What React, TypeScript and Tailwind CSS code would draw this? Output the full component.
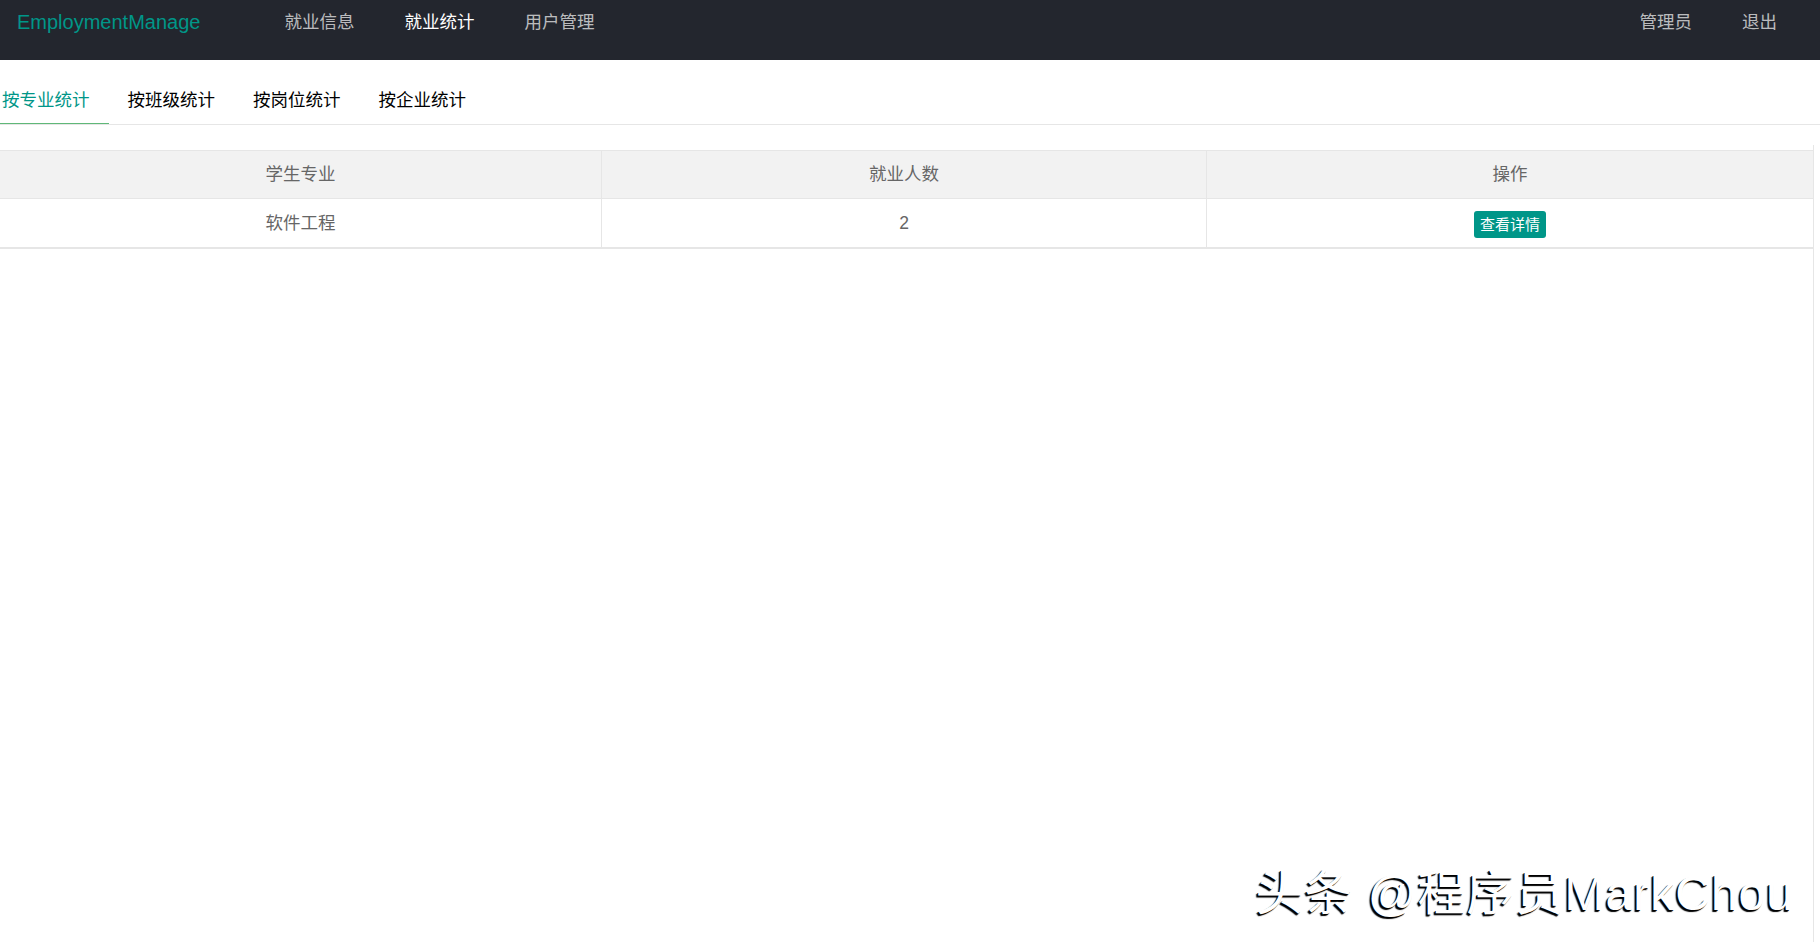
const navLeft = [
  { label: '就业信息', active: false },
  { label: '就业统计', active: true },
  { label: '用户管理', active: false },
];

const tabs = ['按专业统计', '按班级统计', '按岗位统计', '按企业统计'];

const rows = [{ major: '软件工程', count: 2 }];

function Header() {
  return (
    <div className="h-[60px] bg-[#23262e] flex items-start">
      <div className="pl-[17px] h-[44px] leading-[44px] text-[20px] text-[#009688]">EmploymentManage</div>
      <ul className="flex ml-[59px]">
        {navLeft.map((item) => (
          <li
            key={item.label}
            className={`px-[25px] h-[44px] leading-[44px] text-[17.5px] ${
              item.active ? 'text-white' : 'text-white/70'
            }`}
          >
            {item.label}
          </li>
        ))}
      </ul>
      <ul className="flex ml-auto pr-[18px]">
        <li className="px-[25px] h-[44px] leading-[44px] text-[17.5px] text-white/70">管理员</li>
        <li className="px-[25px] h-[44px] leading-[44px] text-[17.5px] text-white/70">退出</li>
      </ul>
    </div>
  );
}

function Tabs() {
  return (
    <div className="mt-[14px] h-[51px] border-b border-[#e6e6e6] overflow-hidden">
      <ul className="flex ml-[-17px] h-[51px]">
        {tabs.map((t, i) => (
          <li
            key={t}
            className={`relative px-[19px] h-[51px] leading-[52px] text-[17.5px] ${
              i === 0 ? 'text-[#009688]' : 'text-black'
            }`}
          >
            {t}
            {i === 0 && <span className="absolute left-0 right-0 bottom-0 h-[2px] bg-[#5fb878]" />}
          </li>
        ))}
      </ul>
    </div>
  );
}

function StatsTable() {
  const cols = 'grid grid-cols-[602px_605px_1fr]';
  return (
    <div className="w-[1813px] border-t border-b-2 border-[#e6e6e6]">
      <div className={`${cols} h-[48px] bg-[#f2f2f2] border-b border-[#e6e6e6] text-[17.5px] text-[#666]`}>
        <div className="flex items-center justify-center border-r border-[#e6e6e6]">学生专业</div>
        <div className="flex items-center justify-center border-r border-[#e6e6e6]">就业人数</div>
        <div className="flex items-center justify-center">操作</div>
      </div>
      {rows.map((r) => (
        <div key={r.major} className={`${cols} h-[48px] text-[17.5px] text-[#666]`}>
          <div className="flex items-center justify-center border-r border-[#e6e6e6]">{r.major}</div>
          <div className="flex items-center justify-center border-r border-[#e6e6e6]">{r.count}</div>
          <div className="flex items-center justify-center pt-[2px]">
            <button className="h-[27px] px-[6px] rounded-[3px] bg-[#009688] text-white text-[15px] leading-[27px]">
              查看详情
            </button>
          </div>
        </div>
      ))}
    </div>
  );
}

export default function App() {
  return (
    <div
      className="relative w-full h-[942px] bg-white overflow-hidden flex flex-col"
      style={{ fontFamily: '"Liberation Sans", "Noto Sans CJK SC", sans-serif' }}
    >
      <Header />
      <Tabs />
      <div className="flex flex-1 mt-[20px]">
        <div className="w-[1813px] pt-[5px]">
          <StatsTable />
        </div>
        <div className="flex-1 border-l border-[#e6e6e6]" />
      </div>
      <div className="absolute right-[26px] top-[870px] text-[48px] leading-none tracking-[1px] text-white whitespace-nowrap [text-shadow:-2px_2px_1px_#000,-1px_1px_0_#222]">
        头条 @程序员MarkChou
      </div>
    </div>
  );
}
